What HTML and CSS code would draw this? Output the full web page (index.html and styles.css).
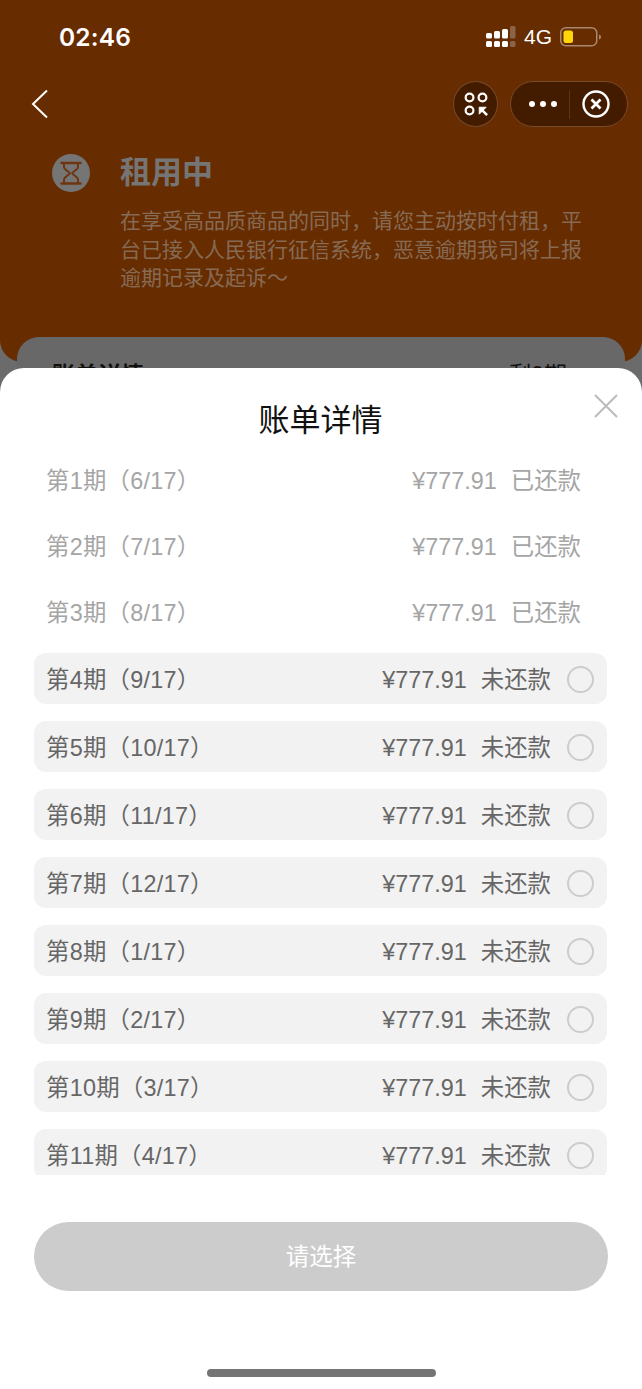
FILE: index.html
```html
<!DOCTYPE html>
<html lang="zh">
<head>
<meta charset="utf-8">
<title>账单详情</title>
<link rel="stylesheet" href="styles.css">
</head>
<body>
<div class="page">
  <header class="hero">
    <div class="status">
      <span class="time">02:46</span>
      <div class="status-right">
        <svg class="signal" width="30" height="22" viewBox="0 0 30 22">
          <g fill="#fff">
            <rect x="0" y="7" width="6" height="5.500" rx="1.500"/><rect x="8" y="5" width="6" height="7.500" rx="1.500"/><rect x="16" y="3" width="6" height="9.500" rx="1.500"/>
            <rect x="0" y="15" width="6" height="6" rx="1.500"/><rect x="8" y="15" width="6" height="6" rx="1.500"/><rect x="16" y="15" width="6" height="6" rx="1.500"/>
          </g>
          <g fill="#8a6448">
            <rect x="24" y="0" width="5.500" height="12.500" rx="1.500"/><rect x="24" y="15" width="5.500" height="6" rx="1.500"/>
          </g>
        </svg>
        <span class="net">4G</span>
        <svg class="battery" width="42" height="20" viewBox="0 0 42 20">
          <rect x="0.750" y="0.750" width="36" height="18" rx="5" fill="none" stroke="#a8886f" stroke-width="1.500"/>
          <rect x="3.500" y="3.500" width="9.500" height="12.500" rx="2.500" fill="#ffd60a"/>
          <path d="M39 7.500c1.500 .5 2 1.500 2 2.500s-.5 2-2 2.500z" fill="#a8886f"/>
        </svg>
      </div>
    </div>
    <nav class="nav">
      <svg class="back" width="18" height="30" viewBox="0 0 18 30"><path d="M16 1.500 2 15l14 13.500" fill="none" stroke="#fff" stroke-width="2"/></svg>
      <div class="nav-right">
        <div class="round">
          <svg width="24" height="24" viewBox="0 0 26 26" fill="none" stroke="#fff" stroke-width="2.400">
            <circle cx="6" cy="6" r="4.200"/><circle cx="20" cy="6" r="4.200"/><circle cx="6" cy="20" r="4.200"/>
            <path d="M16.500 16.500h7.500l-7.500 7.500z" fill="#fff" stroke-width="1"/>
            <path d="M18 18l7 7" stroke-width="2.800"/>
          </svg>
        </div>
        <div class="capsule">
          <span class="dots"><i></i><i></i><i></i></span>
          <span class="divider"></span>
          <svg width="28" height="28" viewBox="0 0 28 28" fill="none" stroke="#fff">
            <circle cx="14" cy="14" r="12.500" stroke-width="2.400"/>
            <path d="M9.500 9.500l9 9M18.500 9.500l-9 9" stroke-width="2.800"/>
          </svg>
        </div>
      </div>
    </nav>
    <div class="state">
      <svg class="glass" width="38" height="38" viewBox="0 0 38 38">
        <circle cx="19" cy="19" r="19" fill="#757575"/>
        <path d="M9.500 9h19M9.500 29.500h19" fill="none" stroke="#6f3410" stroke-width="2.400" stroke-linecap="round"/>
        <path d="M12 9v4c0 2.500 4.500 4 5.800 6.200-1.300 2.200-5.800 3.800-5.800 6.300v4M26 9v4c0 2.500-4.500 4-5.800 6.200 1.300 2.200 5.800 3.800 5.800 6.300v4" fill="none" stroke="#6f3410" stroke-width="2"/>
      </svg>
      <div class="state-text">
        <h1 class="state-title">租用中</h1>
        <p class="state-desc">在享受高品质商品的同时，请您主动按时付租，平台已接入人民银行征信系统，恶意逾期我司将上报逾期记录及起诉～</p>
      </div>
    </div>
  </header>
  <section class="card">
    <span class="card-title">账单详情</span>
    <span class="card-left">剩9期</span>
  </section>

  <div class="sheet">
    <div class="sheet-head">
      <h2 class="sheet-title">账单详情</h2>
      <svg class="close" width="26" height="26" viewBox="0 0 26 26"><path d="M2 2l22 22M24 2 2 24" stroke="#bbb" stroke-width="2" fill="none"/></svg>
    </div>
    <div class="list">
      <div class="row paid"><span class="name">第1期（6/17）</span><span class="price">¥777.91</span><span class="st">已还款</span></div>
      <div class="row paid"><span class="name">第2期（7/17）</span><span class="price">¥777.91</span><span class="st">已还款</span></div>
      <div class="row paid"><span class="name">第3期（8/17）</span><span class="price">¥777.91</span><span class="st">已还款</span></div>
      <div class="row due"><span class="name">第4期（9/17）</span><span class="price">¥777.91</span><span class="st">未还款</span><i class="radio"></i></div>
      <div class="row due"><span class="name">第5期（10/17）</span><span class="price">¥777.91</span><span class="st">未还款</span><i class="radio"></i></div>
      <div class="row due"><span class="name">第6期（11/17）</span><span class="price">¥777.91</span><span class="st">未还款</span><i class="radio"></i></div>
      <div class="row due"><span class="name">第7期（12/17）</span><span class="price">¥777.91</span><span class="st">未还款</span><i class="radio"></i></div>
      <div class="row due"><span class="name">第8期（1/17）</span><span class="price">¥777.91</span><span class="st">未还款</span><i class="radio"></i></div>
      <div class="row due"><span class="name">第9期（2/17）</span><span class="price">¥777.91</span><span class="st">未还款</span><i class="radio"></i></div>
      <div class="row due"><span class="name">第10期（3/17）</span><span class="price">¥777.91</span><span class="st">未还款</span><i class="radio"></i></div>
      <div class="row due"><span class="name">第11期（4/17）</span><span class="price">¥777.91</span><span class="st">未还款</span><i class="radio"></i></div>
    </div>
    <button class="submit">请选择</button>
    <div class="home"></div>
  </div>
</div>
</body>
</html>
```
FILE: styles.css
```css
* { box-sizing: border-box; }
html, body { margin: 0; padding: 0; }
body {
  width: 642px;
  height: 1389px;
  overflow: hidden;
  background: #6b6b6b;
  font-family: "Liberation Sans", "Noto Sans CJK SC", sans-serif;
}
.page { position: relative; height: 1389px; overflow: hidden; }
.hero {
  height: 362px;
  background: #672c00;
  border-radius: 0 0 22px 22px;
  color: #fff;
}
.status {
  height: 74px;
  padding: 0 40px 0 59px;
  display: flex;
  justify-content: space-between;
  align-items: center;
}
.time { font-family: Inter, "Liberation Sans", sans-serif; font-size: 24.500px; font-weight: 600; letter-spacing: .2px; }
.status-right { display: flex; align-items: center; }
.signal { margin-right: 8px; }
.net { font-size: 21px; width: 36px; }
.nav {
  height: 46px;
  margin-top: 7px;
  padding: 0 14px 0 31px;
  display: flex;
  justify-content: space-between;
  align-items: center;
}
.nav-right { display: flex; gap: 12px; }
.round {
  width: 45px;
  height: 46px;
  border-radius: 50%;
  background: #431c00;
  border: 1px solid #7a4a28;
  display: flex;
  align-items: center;
  justify-content: center;
}
.capsule {
  width: 118px;
  height: 46px;
  border-radius: 23px;
  background: #431c00;
  border: 1px solid #7a4a28;
  display: flex;
  align-items: center;
  padding-left: 18px;
}
.dots { display: flex; gap: 5px; width: 28px; }
.dots i { width: 6px; height: 6px; border-radius: 50%; background: #fff; }
.divider { width: 1px; height: 29px; background: #5e3415; margin: 0 12px; }
.state { display: flex; padding: 0 0 0 52px; margin-top: 26px; }
.glass { margin-top: 1px; flex: none; }
.state-text { margin-left: 30px; width: 470px; }
.state-title { margin: 0; font-size: 31px; line-height: 40px; font-weight: 700; color: #757575; }
.state-desc { margin: 14px 0 0; font-size: 21px; line-height: 28.500px; color: #866a54; }
.card {
  height: 120px;
  margin: -25px 17px 0;
  background: #686868;
  border-radius: 22px 22px 0 0;
  display: flex;
  justify-content: space-between;
  padding: 23px 58px 0 35px;
  font-size: 23px;
  line-height: 30px;
  color: #111;
}
.card-title { font-weight: 700; }
.sheet {
  position: absolute;
  left: 0;
  right: 0;
  top: 368px;
  bottom: 0;
  background: #fff;
  border-radius: 24px 24px 0 0;
  display: flex;
  flex-direction: column;
  padding: 0 35px 0 34px;
}
.sheet-head { height: 87px; position: relative; flex: none; }
.sheet-title {
  margin: 0;
  padding-top: 31px;
  text-align: center;
  font-size: 31px;
  line-height: 44px;
  font-weight: 400;
  color: #111;
}
.close { position: absolute; right: -12px; top: 25px; }
.list { height: 720px; overflow: hidden; flex: none; }
.row {
  display: flex;
  align-items: center;
  height: 50px;
  line-height: 46px;
  padding: 2px 13px 0 12px;
  border-radius: 12px;
  font-size: 23.400px;
}
.name { margin-right: auto; letter-spacing: .25px; }
.st { margin-left: 14px; }
.paid { color: #a5a5a5; margin-bottom: 16px; padding-right: 26px; }
.due { color: #666; background: #f2f2f2; margin-top: 17px; height: 51px; }
.paid + .due { margin-top: 0; }
.radio {
  display: block;
  flex: none;
  width: 27px;
  height: 27px;
  margin-left: 16px;
  border: 2px solid #ccc;
  border-radius: 50%;
}
.submit {
  flex: none;
  height: 69px;
  margin-top: 47px;
  width: 574px;
  padding: 0 0 4px;
  border: 0;
  border-radius: 35px;
  background: #ccc;
  color: #fff;
  font: inherit;
  font-size: 23.500px;
}
.home {
  flex: none;
  width: 229px;
  height: 8px;
  margin: 78px 0 0 173px;
  border-radius: 4px;
  background: #757575;
}
```
